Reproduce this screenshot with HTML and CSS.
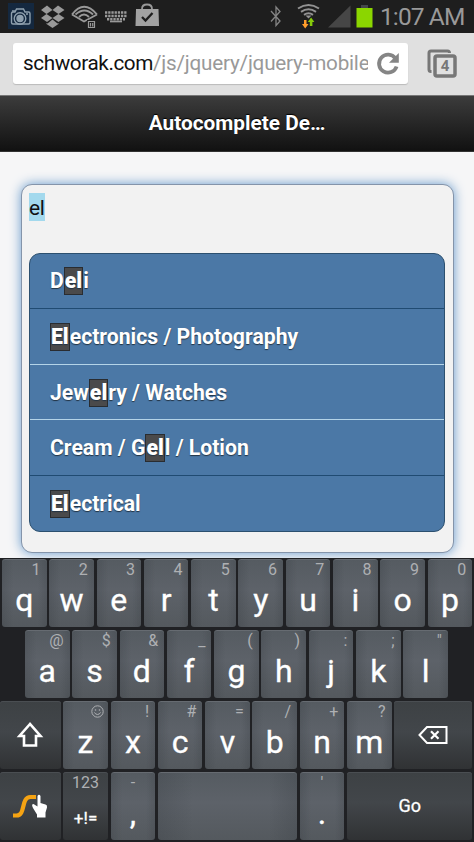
FILE: index.html
```
<!DOCTYPE html>
<html lang="en">
<head>
<meta charset="utf-8">
<title>Autocomplete Demo</title>
<link rel="stylesheet" href="styles.css">
</head>
<body>
<div class="status">
  <svg class="status-icons" width="170" height="33" viewBox="0 0 170 33">
    <rect x="8" y="3" width="26" height="26" fill="#14283f"/>
    <g fill="none" stroke="#8fa0ae" stroke-width="1.4">
      <path d="M11.500 13.500q0-1.500 1.500-1.500h2l1.500-3h7l1.500 3h3.500q1.500 0 1.500 1.500v9q0 1.500-1.500 1.500H13q-1.500 0-1.500-1.500z"/>
      <circle cx="20" cy="18.500" r="5.800"/><circle cx="20" cy="18.500" r="3" fill="#8fa0ae"/><path d="M26 14h2M12 11h3"/>
    </g>
    <g fill="#999">
      <path d="M41 10l6-4.500 5.500 4.500-6 4zM52.500 10L58 5.500l6.500 4.500-6 4zM41 18l5.500-4 6 4-5.500 4zM52.500 18l6-4 6 4-6 4zM46.500 23l1 .5 5-4 5 4 1-.5v1l-6 4-6-4z"/>
    </g>
    <g fill="none" stroke="#999" stroke-width="1.900">
      <path d="M72 14.500L84 21.500 97 14.500M72 14.500Q84-1 97 14.500M75.500 14.500q9-8 17.500 0M79 17q5-5 10 0"/>
    </g>
    <rect x="87" y="20" width="9" height="9" fill="#1e1e1e"/>
    <path d="M88.500 21.500h6v6h-6zM90.500 23v3.500M92.700 23v3.500" fill="none" stroke="#999" stroke-width="1.200"/>
    <g stroke="#999" stroke-width="2.600" stroke-dasharray="2.300 .9"><path d="M105 12.500h22M105 16h22M107 19.300h18"/></g>
    <path d="M110 21.500h12" stroke="#999" stroke-width="1.700"/>
    <path d="M142 10V9q0-4.500 5-4.500T152 9v1" fill="none" stroke="#999" stroke-width="1.800"/>
    <path d="M136 9h22.500l.5 17h-23.500z" fill="#a2a2a2"/>
    <path d="M142 17l3.500 3.500 7-7.500" fill="none" stroke="#1e1e1e" stroke-width="2.300"/>
  </svg>
  <svg class="signal" width="110" height="33" viewBox="266 0 110 33">
    <path d="M271 11l9 10-4 4.500V7l4 4.500-9 10" fill="none" stroke="#858585" stroke-width="1.300"/>
    <g fill="none" stroke="#929292" stroke-width="2">
      <path d="M298 8.500q10.500-7 21 0M301 11.800q7.500-5 15 0M304 14.800q4.500-3 9 0"/>
    </g>
    <path d="M305.500 15.500h6l-3 3z" fill="#929292"/>
    <path d="M304 20h2.500v4h2l-3.300 4.500L302 24h2z" fill="#ff9d2b"/>
    <path d="M309.800 26v-4h-2l3.300-4.500 3.300 4.500h-2v4z" fill="#86cb0a"/>
    <path d="M328 27.500h22.500V5.500z" fill="#464646"/>
    <rect x="361" y="5" width="7" height="4" fill="#44464a"/>
    <rect x="356.500" y="8" width="16" height="19.500" fill="#8bd600"/>
  </svg>
  <span class="clock">1:07 AM</span>
</div>

<div class="browser">
  <div class="url">
    <span class="address">schworak.com<span class="path">/js/jquery/jquery-mobile</span></span>
    <svg width="26" height="26" viewBox="0 0 26 26"><path d="M20.400 7.400A9 9 0 1 0 21.600 15.500" fill="none" stroke="#858585" stroke-width="3.800"/><path d="M23.800 2v9.700H14z" fill="#858585"/></svg>
  </div>
  <div class="tabs">
    <svg width="32" height="32" viewBox="0 0 32 32"><path d="M4.500 23.500H4q-2 0-2-2V5q0-2 2-2h16.500q2 0 2 2" fill="none" stroke="#777" stroke-width="3"/><rect x="8" y="8" width="20" height="20" rx="2" fill="none" stroke="#777" stroke-width="3.500"/></svg>
    <span class="tab-count">4</span>
  </div>
</div>

<h1 class="title">Autocomplete De…</h1>

<main class="content">
  <div class="card">
    <div class="field"><span class="selected">el</span></div>
    <ul class="results">
      <li>D<b>el</b>i</li>
      <li class="light"><b>El</b>ectronics / Photography</li>
      <li class="light">Jew<b>el</b>ry / Watches</li>
      <li>Cream / G<b>el</b>l / Lotion</li>
      <li><b>El</b>ectrical</li>
    </ul>
  </div>
</main>

<div class="keyboard">
  <div class="row">
    <div class="key"><i>1</i><span>q</span></div><div class="key"><i>2</i><span>w</span></div><div class="key"><i>3</i><span>e</span></div><div class="key"><i>4</i><span>r</span></div><div class="key"><i>5</i><span>t</span></div><div class="key"><i>6</i><span>y</span></div><div class="key"><i>7</i><span>u</span></div><div class="key"><i>8</i><span>i</span></div><div class="key"><i>9</i><span>o</span></div><div class="key"><i>0</i><span>p</span></div>
  </div>
  <div class="row home">
    <div class="key"><i>@</i><span>a</span></div><div class="key"><i>$</i><span>s</span></div><div class="key"><i>&amp;</i><span>d</span></div><div class="key"><i>_</i><span>f</span></div><div class="key"><i>(</i><span>g</span></div><div class="key"><i>)</i><span>h</span></div><div class="key"><i>:</i><span>j</span></div><div class="key"><i>;</i><span>k</span></div><div class="key"><i>"</i><span>l</span></div>
  </div>
  <div class="row lower">
    <div class="key dark wide"><svg width="28" height="28" viewBox="0 0 28 28"><path d="M14 3L3.500 15H8v9.500h12V15h4.500z" fill="none" stroke="#fff" stroke-width="2.600"/></svg></div>
    <div class="key"><svg class="smile" width="13" height="13" viewBox="0 0 13 13"><circle cx="6.500" cy="6.500" r="5.700" fill="none" stroke="#aeb0b3"/><circle cx="4.500" cy="5" r=".8" fill="#aeb0b3"/><circle cx="8.500" cy="5" r=".8" fill="#aeb0b3"/><path d="M3.300 7.500q3.200 4 6.400 0" fill="none" stroke="#aeb0b3"/></svg><span>z</span></div><div class="key"><i>!</i><span>x</span></div><div class="key"><i>#</i><span>c</span></div><div class="key"><i>=</i><span>v</span></div><div class="key"><i>/</i><span>b</span></div><div class="key"><i>+</i><span>n</span></div><div class="key"><i>?</i><span>m</span></div>
    <div class="key dark delete"><svg width="32" height="20" viewBox="0 0 32 20"><path d="M2.500 10L10 2h19.500v16H10z" fill="none" stroke="#fff" stroke-width="2"/><path d="M14 6.200l7.500 7.500M21.500 6.200L14 13.700" stroke="#fff" stroke-width="2.200"/></svg></div>
  </div>
  <div class="row lower">
    <div class="key dark wide"><svg width="36" height="26" viewBox="0 0 36 26"><path d="M1 22.500h3.500c9.500 0 4-18.500 14-18.500h5.500" fill="none" stroke="#f5a313" stroke-width="4.200"/><path d="M25.500 3q1.500-2.500 3 0v7l5 1.500q2 .5 1.500 3l-1.500 5v5H25v-3l-4-6.500q-2-4 .5-4l4 2.500z" fill="#fff"/></svg></div>
    <div class="key dark symbols"><i>123</i><span>+!=</span></div>
    <div class="key punct"><i>-</i><span>,</span></div>
    <div class="key space"></div>
    <div class="key punct"><i>'</i><span>.</span></div>
    <div class="key dark go"><span>Go</span></div>
  </div>
</div>
</body>
</html>
```
FILE: styles.css
```
* { box-sizing: border-box; }
body {
  margin: 0;
  width: 474px;
  height: 842px;
  overflow: hidden;
  display: flex;
  flex-direction: column;
  font-family: Roboto, "Liberation Sans", sans-serif;
  background: #f5f5f5;
}
svg { display: block; flex: none; }
.status {
  height: 33px;
  flex: none;
  display: flex;
  background: #1e1e1e;
}
.signal { margin-left: 96px; }
.clock {
  margin-left: 4px;
  color: #999;
  font-size: 24.500px;
  letter-spacing: -0.900px;
  line-height: 33px;
  white-space: nowrap;
}
.browser {
  height: 62px;
  flex: none;
  display: flex;
  align-items: flex-start;
  padding: 10px 13px;
  background: #e0e0e0;
}
.url {
  width: 395px;
  height: 41px;
  display: flex;
  align-items: center;
  padding: 0 7px 0 10px;
  background: #fff;
  border-radius: 3px;
  box-shadow: 0 1px 1px #bbb;
}
.address {
  width: 345px;
  margin-right: 7px;
  overflow: hidden;
  white-space: nowrap;
  font-size: 20.700px;
  letter-spacing: -0.400px;
  line-height: 43px;
  color: #111;
}
.path { color: #999; letter-spacing: -0.220px; }
.tabs {
  position: relative;
  margin: 5px 0 0 19px;
}
.tab-count {
  position: absolute;
  left: 8px;
  top: 8px;
  width: 20px;
  font-size: 15px;
  font-weight: 700;
  line-height: 21px;
  text-align: center;
  color: #777;
}
.title {
  height: 57px;
  flex: none;
  margin: 0;
  border-top: 1px solid #777;
  border-bottom: 1px solid #333;
  background: linear-gradient(#3c3c3c, #111);
  color: #fff;
  font-size: 20.800px;
  line-height: 55px;
  text-align: center;
  text-shadow: 0 -1px 1px #000;
}
.content {
  height: 406px;
  flex: none;
  padding: 32px 20.500px 5px;
  background: #f6f6f7;
}
.card {
  height: 369px;
  padding: 8px 8px 0 7.500px;
  border-radius: 11px;
  background: #f2f2f2;
  border: 1px solid #8494aa;
  box-shadow: 0 0 12px #6699cb;
}
.field { height: 59.500px; }
.selected {
  display: inline-block;
  height: 28px;
  background: #a3d9ed;
  font-size: 21px;
  letter-spacing: -0.300px;
  line-height: 31px;
  color: #111;
}
.results {
  margin: 0;
  padding: 0;
  list-style: none;
  height: 279px;
  border: 1px solid #2c506f;
  border-radius: 11px;
  background: #4b78a6;
  overflow: hidden;
}
.results li {
  height: 55.600px;
  padding: 13.900px 20px 0;
  border-bottom: 1px solid #204b72;
  color: #fff;
  font-size: 21.200px;
  font-weight: 700;
  line-height: 27px;
  white-space: nowrap;
  text-shadow: 0 1px 1px #234;
}
.results .light { border-bottom-color: #b4d4e8; }
.results li:last-child { border-bottom: 0; }
.results b {
  display: inline-block;
  height: 28px;
  line-height: 25px;
  border: 1px solid #292c30;
  background: #4a4a4b;
}
.keyboard {
  flex: none;
  height: 284px;
  display: flex;
  flex-direction: column;
  gap: 3px;
  padding: 1px 0 2px;
  background: #202124;
}
.row {
  height: 68px;
  display: flex;
  gap: 2.800px;
  padding: 0 2px;
}
.home { padding-left: 25px; }
.lower { padding-left: 0; }
.key {
  width: 44.500px;
  height: 68px;
  flex: none;
  border-radius: 3px;
  background: linear-gradient(90deg, rgba(45,50,55,.2), transparent 25%, transparent 80%, rgba(45,50,55,.2)), linear-gradient(#555b61, #5d6269 45%, #54595e);
  box-shadow: inset 0 1px #666b71;
  color: #fff;
  text-align: center;
}
.key i {
  display: block;
  height: 21px;
  padding-right: 6px;
  font-style: normal;
  font-size: 16px;
  line-height: 21px;
  text-align: right;
  color: #aeb0b3;
}
.key span {
  display: block;
  font-size: 32px;
  line-height: 40px;
  -webkit-text-stroke: 0.300px #fff;
}
.key .smile { margin: 4px 4px 4px auto; }
.key.dark {
  display: flex;
  align-items: center;
  justify-content: center;
  background: linear-gradient(#3d4144, #42464a 45%, #303234);
  box-shadow: inset 0 1px #4a4e52;
}
.key.wide { width: 60.500px; }
.key.delete { width: 78px; }
.key.space { width: 139px; }
.key.go { width: 125.500px; }
.key.go span { font-size: 18px; }
.key.punct i { padding: 0; text-align: center; }
.key.symbols { flex-direction: column; justify-content: flex-start; }
.symbols i { padding: 0; }
.key.symbols span { font-size: 17px; line-height: 50px; }
```
